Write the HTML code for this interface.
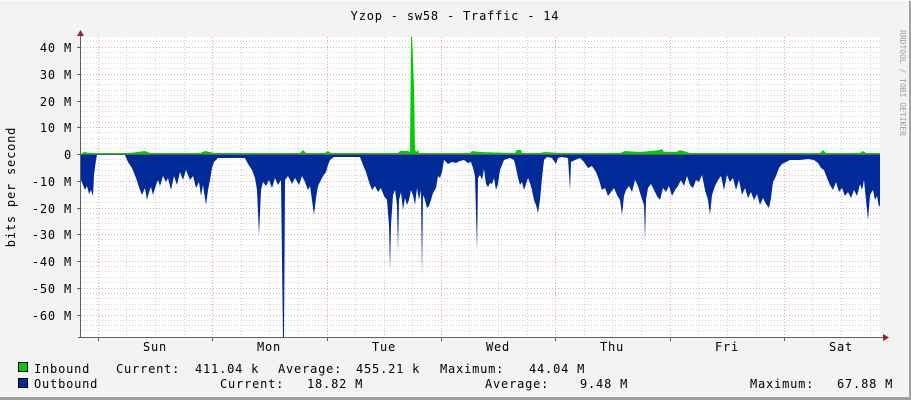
<!DOCTYPE html>
<html><head><meta charset="utf-8"><style>
html,body{margin:0;padding:0;background:#f3f3f3}
svg{display:block}
text{font-family:"DejaVu Sans Mono","Liberation Mono",monospace;fill:#000;letter-spacing:0.8px}
</style></head><body>
<svg width="911" height="400" xmlns="http://www.w3.org/2000/svg">
<rect width="911" height="400" fill="#f3f3f3"/>
<rect x="909" y="0" width="2" height="400" fill="#a0a0a0"/>
<rect x="0" y="397" width="911" height="3" fill="#a0a0a0"/>
<rect x="0" y="0" width="911" height="1" fill="#fcfcfc"/>
<rect x="81" y="37" width="799" height="300" fill="#fff"/>
<g stroke="#d2d2d2" stroke-width="1" stroke-dasharray="1,2" shape-rendering="crispEdges">
<path d="M81 41.5H880M81 52.5H880M81 57.5H880M81 63.5H880M81 68.5H880M81 79.5H880M81 84.5H880M81 90.5H880M81 95.5H880M81 106.5H880M81 111.5H880M81 116.5H880M81 122.5H880M81 132.5H880M81 138.5H880M81 143.5H880M81 148.5H880M81 159.5H880M81 164.5H880M81 170.5H880M81 175.5H880M81 186.5H880M81 191.5H880M81 197.5H880M81 202.5H880M81 213.5H880M81 218.5H880M81 223.5H880M81 229.5H880M81 239.5H880M81 245.5H880M81 250.5H880M81 255.5H880M81 266.5H880M81 271.5H880M81 277.5H880M81 282.5H880M81 293.5H880M81 298.5H880M81 304.5H880M81 309.5H880M81 320.5H880M81 325.5H880M81 330.5H880"/>
<path d="M126.5 37V337M155.5 37V337M184.5 37V337M241.5 37V337M269.5 37V337M298.5 37V337M355.5 37V337M384.5 37V337M412.5 37V337M469.5 37V337M498.5 37V337M527.5 37V337M584.5 37V337M612.5 37V337M641.5 37V337M698.5 37V337M727.5 37V337M756.5 37V337M812.5 37V337M841.5 37V337M870.5 37V337"/>
</g>
<g stroke="#f0a0a0" stroke-width="1" stroke-dasharray="1,2" shape-rendering="crispEdges">
<path d="M81 47.5H880M81 74.5H880M81 101.5H880M81 127.5H880M81 181.5H880M81 208.5H880M81 234.5H880M81 261.5H880M81 288.5H880M81 315.5H880"/>
<path d="M98.5 37V337M212.5 37V337M327.5 37V337M441.5 37V337M555.5 37V337M670.5 37V337M784.5 37V337"/>
</g>
<path fill="#00cc00" d="M81 154 L84 152 L90 153 L130 153 L145 151 L150 153 L200 153 L205 151 L215 153 L300 153 L303 150 L306 153 L325 153 L328 151 L331 153 L398 153 L400 151 L408 151 L410 152 L411 37 L412 37 L413 60 L414 88 L415 150 L417 152 L418 149 L419 153 L470 153 L472 151 L480 152 L515 153 L517 150 L521 150 L522 153 L540 153 L545 152 L560 153 L620 153 L625 151 L640 152 L660 150 L662 149 L664 152 L676 152 L680 150 L690 153 L820 153 L823 150 L826 153 L860 153 L863 151 L866 153 L880 153 L880 154 Z"/>
<path fill="#002a97" d="M81 154 L81 180 L83 185 L85 190 L87 186 L89 194 L91 190 L93 196 L94 175 L96 160 L97 155 L125 155 L128 162 L132 168 L136 178 L140 190 L142 195 L145 188 L147 200 L149 192 L151 187 L153 195 L156 185 L158 180 L160 186 L163 176 L166 182 L168 178 L171 190 L174 176 L177 185 L180 172 L183 180 L186 170 L190 180 L193 176 L196 188 L199 182 L201 196 L203 185 L206 205 L208 190 L210 180 L212 168 L214 162 L218 158 L245 158 L248 164 L252 170 L255 178 L257 190 L259 235 L261 190 L263 182 L266 186 L269 180 L272 188 L275 178 L278 185 L281 180 L283 337 L284 337 L285 180 L288 176 L292 184 L295 178 L299 185 L302 176 L305 182 L308 190 L310 186 L312 200 L314 215 L316 198 L318 186 L320 182 L323 176 L326 172 L328 165 L330 160 L334 157 L360 157 L363 165 L366 172 L369 182 L372 190 L375 186 L378 192 L381 188 L384 196 L387 200 L389 225 L390 270 L391 225 L393 195 L395 190 L397 205 L398 252 L399 200 L401 192 L403 210 L405 198 L407 205 L409 200 L411 190 L413 195 L415 205 L417 188 L419 200 L421 190 L422 277 L423 195 L425 200 L427 208 L429 206 L431 200 L433 193 L436 188 L438 176 L440 178 L442 172 L444 160 L446 162 L448 164 L452 162 L456 163 L460 161 L464 160 L468 163 L471 162 L473 168 L475 176 L477 250 L478 178 L480 175 L482 180 L484 169 L486 184 L488 187 L490 183 L492 184 L494 178 L496 190 L498 184 L500 170 L504 160 L510 158 L514 160 L516 168 L518 178 L520 185 L522 182 L524 190 L526 184 L528 178 L530 183 L532 190 L534 200 L536 205 L538 213 L540 200 L542 178 L544 160 L547 157 L552 158 L556 164 L558 158 L562 157 L568 158 L570 190 L571 162 L575 160 L580 158 L584 162 L588 168 L592 166 L596 172 L599 180 L602 190 L605 188 L608 196 L611 192 L614 188 L617 195 L620 200 L622 215 L624 196 L626 190 L629 186 L632 192 L635 180 L638 186 L641 196 L644 205 L645 240 L646 200 L648 188 L651 184 L654 190 L657 196 L660 200 L663 188 L666 192 L669 186 L672 196 L675 190 L678 186 L681 180 L684 186 L687 176 L690 185 L693 188 L696 180 L699 182 L702 175 L705 190 L708 200 L710 215 L712 195 L715 186 L718 180 L721 176 L724 190 L727 175 L730 182 L733 178 L736 190 L739 180 L742 195 L745 188 L748 198 L751 192 L754 200 L757 194 L760 205 L763 198 L766 204 L769 208 L771 198 L773 182 L776 176 L779 168 L782 164 L786 162 L790 160 L800 160 L808 159 L814 160 L818 163 L821 168 L824 170 L827 178 L830 185 L833 190 L836 182 L839 192 L842 188 L845 196 L848 192 L851 198 L854 190 L857 196 L860 184 L862 190 L864 180 L866 200 L868 220 L870 195 L873 190 L875 200 L877 196 L879 207 L880 205 L880 154 Z"/>
<g stroke="#606060" stroke-width="1" shape-rendering="crispEdges">
<path d="M77 47.5H81M77 74.5H81M77 101.5H81M77 127.5H81M77 154.5H81M77 181.5H81M77 208.5H81M77 234.5H81M77 261.5H81M77 288.5H81M77 315.5H81"/>
<path d="M98.5 337V341M212.5 337V341M327.5 337V341M441.5 337V341M555.5 337V341M670.5 337V341M784.5 337V341"/>
<path d="M81 154.5H880"/>
<path d="M80.5 35V338M78 337.5H884"/>
</g>
<path d="M77 36 L80.5 30 L84 36 Z" fill="#a02020"/>
<path d="M883 334 L889 337.5 L883 341 Z" fill="#a02020"/>
<g font-size="12">
<text x="455" y="20" text-anchor="middle">Yzop - sw58 - Traffic - 14</text>
<g text-anchor="end">
<text x="72" y="52">40 M</text><text x="72" y="79">30 M</text><text x="72" y="106">20 M</text><text x="72" y="132">10 M</text><text x="72" y="159">0</text><text x="72" y="186">-10 M</text><text x="72" y="213">-20 M</text><text x="72" y="239">-30 M</text><text x="72" y="266">-40 M</text><text x="72" y="293">-50 M</text><text x="72" y="320">-60 M</text>
</g>
<text transform="translate(15,187) rotate(-90)" text-anchor="middle">bits per second</text>
<g text-anchor="middle">
<text x="155" y="351">Sun</text><text x="269" y="351">Mon</text><text x="384" y="351">Tue</text><text x="498" y="351">Wed</text><text x="612" y="351">Thu</text><text x="727" y="351">Fri</text><text x="841" y="351">Sat</text>
</g>
<text x="34" y="373">Inbound</text>
<text x="116" y="373">Current:</text>
<text x="195" y="373">411.04 k</text>
<text x="278" y="373">Average:</text>
<text x="356" y="373">455.21 k</text>
<text x="440" y="373">Maximum:</text>
<text x="529" y="373">44.04 M</text>
<text x="34" y="388">Outbound</text>
<text x="220" y="388">Current:</text>
<text x="307" y="388">18.82 M</text>
<text x="485" y="388">Average:</text>
<text x="580" y="388">9.48 M</text>
<text x="750" y="388">Maximum:</text>
<text x="837" y="388">67.88 M</text>
</g>
<rect x="18.5" y="362.5" width="9" height="9" fill="#00cc00" stroke="#000"/>
<rect x="18.5" y="378.5" width="9" height="9" fill="#002a97" stroke="#000"/>
<text transform="translate(900,30) rotate(90)" font-size="8" style="fill:#a0a0a0;letter-spacing:0">RRDTOOL / TOBI OETIKER</text>
</svg>
</body></html>
